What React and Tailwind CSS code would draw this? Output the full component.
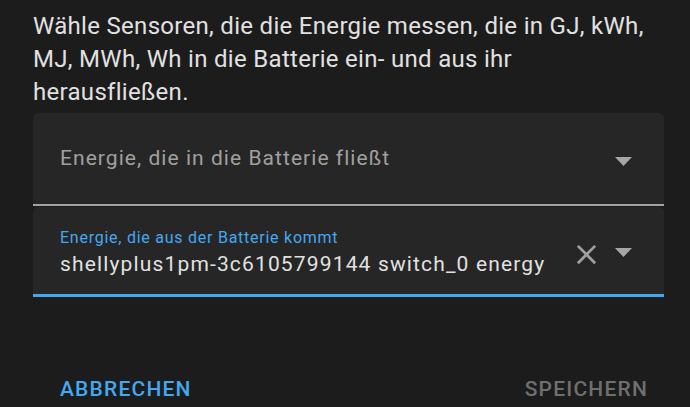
export default function App() {
  return (
    <div className="w-[690px] h-[407px] overflow-hidden bg-[#1c1c1c] font-[Roboto,sans-serif]">
      <div className="ml-[33px] w-[631px] pt-[10px] text-[24px] leading-[33px] tracking-[0.3px] text-[#e1e1e1]">
        Wähle Sensoren, die die Energie messen, die in GJ, kWh, MJ, MWh, Wh in die Batterie ein- und aus ihr herausfließen.
      </div>
      <div className="ml-[33px] mr-[26px] mt-[4px] flex flex-col gap-[1px]">
        <div className="h-[93px] rounded-t-[5px] bg-[#262626] border-b-2 border-[#a3a3a3] flex items-center pl-[27px] pr-[32px]">
          <div className="flex-1 text-[21px] leading-[25px] tracking-[1.05px] text-[#a0a0a0]">Energie, die in die Batterie fließt</div>
          <svg width="17" height="9" viewBox="0 0 17 9" className="translate-y-[3px]">
            <polygon points="0,0 17,0 8.5,9" fill="#a6a6a6" />
          </svg>
        </div>
        <div className="h-[90px] rounded-t-[5px] bg-[#262626] border-b-[3px] border-[#44a8f0] flex pl-[27px] pr-[32px]">
          <div className="flex-1 pt-[21px] flex flex-col gap-[5px]">
            <div className="text-[16px] leading-[19px] tracking-[0.75px] text-[#44a8f0]">Energie, die aus der Batterie kommt</div>
            <div className="text-[21px] leading-[25px] tracking-[1.15px] text-[#e1e1e1] whitespace-nowrap">shellyplus1pm-3c6105799144 switch_0 energy</div>
          </div>
          <div className="self-center flex items-center gap-[12px]">
            <svg width="33" height="33" viewBox="0 0 24 24" className="translate-y-[4px]">
              <path d="M19 6.41L17.59 5 12 10.59 6.41 5 5 6.41 10.59 12 5 17.59 6.41 19 12 13.41 17.59 19 19 17.59 13.41 12z" fill="#a0a0a0" />
            </svg>
            <svg width="17" height="9" viewBox="0 0 17 9" className="translate-y-[2px]">
              <polygon points="0,0 17,0 8.5,9" fill="#a6a6a6" />
            </svg>
          </div>
        </div>
      </div>
      <div className="mt-[80px] flex justify-between pl-[60px] pr-[42px] text-[21px] leading-[24px] font-medium tracking-[1.2px]">
        <span className="text-[#44a8f0]">ABBRECHEN</span>
        <span className="text-[#6f6f6f]">SPEICHERN</span>
      </div>
    </div>
  );
}
